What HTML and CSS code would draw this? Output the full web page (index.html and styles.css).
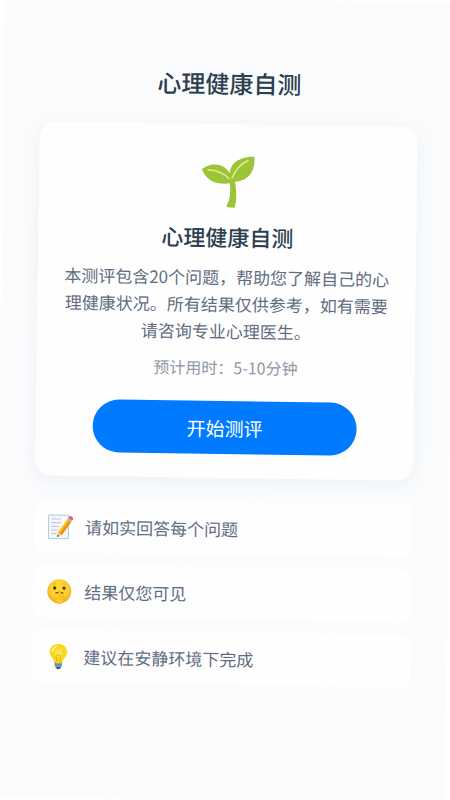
FILE: index.html
```html
<!DOCTYPE html>
<html lang="zh-CN">
<head>
<meta charset="utf-8">
<meta name="viewport" content="width=device-width, initial-scale=1">
<title>心理健康自测</title>
<link rel="stylesheet" href="styles.css">
</head>
<body>
<main class="page">
  <h1 class="page-title">心理健康自测</h1>

  <section class="card">
    <svg class="card-icon" viewBox="600 464 168 164" aria-hidden="true">
      <path fill="#9cc437" d="M689 519 C690 492 712 469 763 468 C767 510 748 541 705 545 C711 573 711 600 706 620 Q705 624 700 624 L684 623 Q679 622 681 617 C693 597 692 570 689 550 C650 555 619 544 604 508 C630 485 673 489 689 519 Z"/>
      <path fill="none" stroke="#e3e791" stroke-width="5" stroke-linecap="round" d="M623 510 C650 510 672 520 687 536 M696 533 C706 509 724 489 744 480"/>
    </svg>
    <h2 class="card-title">心理健康自测</h2>
    <p class="card-text">本测评包含20个问题，帮助您了解自己的心理健康状况。所有结果仅供参考，如有需要请咨询专业心理医生。</p>
    <p class="card-time">预计用时：5-10分钟</p>
    <button class="start" type="button">开始测评</button>
  </section>

  <ul class="tips">
    <li class="tip">
      <svg class="tip-icon" viewBox="0 0 78 78" aria-hidden="true">
        <rect x="4" y="4" width="60" height="71" rx="2" fill="#f4f8fa" stroke="#a9cbdd" stroke-width="3"/>
        <path d="M12 16h28M12 27h30M12 38h24M12 49h20M12 60h16" stroke="#b4bcc3" stroke-width="2.5"/>
        <path d="M33 56 60 17 71 25 44 64 31 69Z" fill="#fcb90f"/>
        <path d="M38 60 66 21 71 25 44 64Z" fill="#ec8f0c"/>
        <path d="M33 56 44 64 31 69Z" fill="#f2cf9b"/>
        <path d="M32 63 36 67 30 70Z" fill="#303a42"/>
        <path d="M60 17 63 12 74 20 71 25Z" fill="#a9b7bf"/>
        <path d="M63 12 66 8Q69 5 73 8L76 11Q79 14 76 18L74 20Z" fill="#ee5565"/>
      </svg>
      <span>请如实回答每个问题</span>
    </li>
    <li class="tip">
      <svg class="tip-icon" viewBox="0 0 78 78" aria-hidden="true">
        <defs>
          <radialGradient id="face" cx="50%" cy="40%" r="60%">
            <stop offset="0.5" stop-color="#fdd835"/>
            <stop offset="1" stop-color="#f4a81c"/>
          </radialGradient>
        </defs>
        <circle cx="39" cy="38" r="36" fill="url(#face)"/>
        <path d="M20 18q4-4 9-3M49 15q6-1 9 3" fill="none" stroke="#d99a20" stroke-width="2" stroke-linecap="round"/>
        <ellipse cx="25" cy="28" rx="5" ry="5" fill="#49351d"/>
        <ellipse cx="53" cy="28" rx="5" ry="5" fill="#49351d"/>
        <path d="M29 43q10-4 21 0" fill="none" stroke="#6e461b" stroke-width="4" stroke-linecap="round"/>
        <path d="M37 37q4-4 6 1l1 13q10-3 11 4-1 15-12 20-10 1-15-8-1-8 9-13Z" fill="#ffca28" stroke="#f0a81c" stroke-width="2"/>
        <path d="M43 54l9 2M42 61l9 1" stroke="#f0a81c" stroke-width="2" stroke-linecap="round"/>
      </svg>
      <span>结果仅您可见</span>
    </li>
    <li class="tip">
      <svg class="tip-icon" viewBox="0 0 78 78" aria-hidden="true">
        <path d="M27 54h24l-2 14q-2 8-10 8t-10-8Z" fill="#568795"/>
        <path d="M28 60h22M29 67h20" stroke="#8bb4bf" stroke-width="3"/>
        <path d="M33 71h12l-3 5h-6Z" fill="#294e60"/>
        <path d="M39 1C23 1 13 12 13 25c0 13 12 19 14 31q12 5 24 0c2-12 14-18 14-31C65 12 55 1 39 1Z" fill="#fdd61a"/>
        <circle cx="39" cy="29" r="12" fill="#fbe45a"/>
        <path d="M35 55 32 36q3-5 7 0 4-5 7 0l-3 19" fill="none" stroke="#e6a315" stroke-width="2.5"/>
        <path d="M21 22q2-9 10-13" fill="none" stroke="#fff59d" stroke-width="5" stroke-linecap="round"/>
      </svg>
      <span>建议在安静环境下完成</span>
    </li>
  </ul>
</main>
</body>
</html>
```
FILE: styles.css
```css
* {
  box-sizing: border-box;
}

html {
  background: #fefefe;
  overflow: hidden;
}

body,
h1,
h2,
p,
ul {
  margin: 0;
  padding: 0;
}

body {
  font-family: "Noto Sans CJK SC", sans-serif;
  color: #5f6d82;
}

.page {
  min-height: 100vh;
  padding: 65px 36px 48px;
  background: #f9fbfd;
  transform: rotate(0.8deg);
}

.page-title {
  margin-bottom: 23px;
  color: #2c3e50;
  font-size: 24px;
  font-weight: 500;
  line-height: 36px;
  text-align: center;
}

.card {
  display: flex;
  flex-direction: column;
  align-items: center;
  padding: 31px 24px 24px;
  border-radius: 16px;
  background: #fefefe;
  box-shadow: 0 4px 16px rgba(30, 50, 70, 0.05);
  text-align: center;
}

.card-icon {
  width: 56px;
  height: 54px;
}

.card-title {
  margin-top: 11px;
  color: #2c3e50;
  font-size: 22px;
  font-weight: 500;
  line-height: 32px;
}

.card-text {
  margin-top: 11px;
  font-size: 17px;
  line-height: 27px;
}

.card-time {
  margin-top: 11px;
  color: #8f98a6;
  font-size: 16px;
  line-height: 24px;
}

.start {
  width: 80%;
  margin-top: 22px;
  padding: 12px;
  border: 0;
  border-radius: 28px;
  background: #007aff;
  color: #fff;
  font-family: inherit;
  font-size: 19px;
  line-height: 29px;
}

.tips {
  display: grid;
  gap: 12px;
  margin-top: 24px;
  list-style: none;
}

.tip {
  display: flex;
  align-items: center;
  gap: 12px;
  padding: 12px 13px;
  border-radius: 8px;
  background: #fefefe;
  font-size: 17px;
  line-height: 29px;
}

.tip-icon {
  width: 26px;
  height: 26px;
}
```
